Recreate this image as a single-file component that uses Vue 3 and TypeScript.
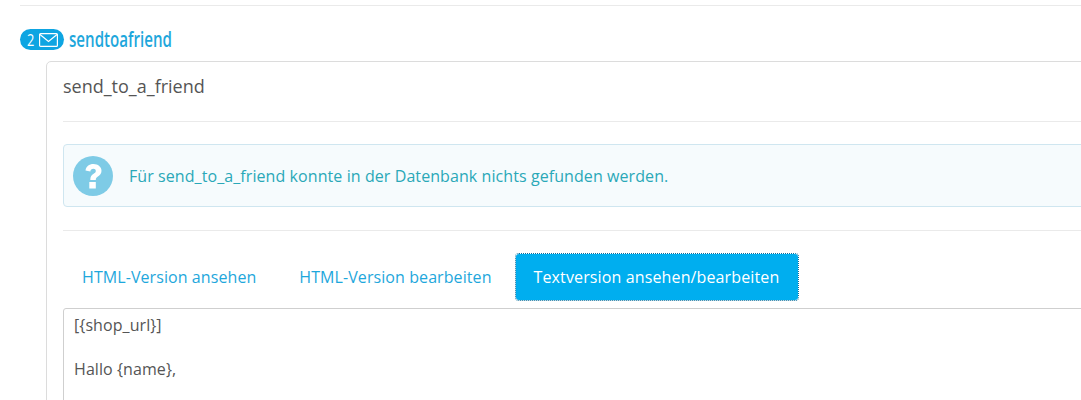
<script setup lang="ts">
const tabs = [
  { label: 'HTML-Version ansehen', active: false },
  { label: 'HTML-Version bearbeiten', active: false },
  { label: 'Textversion ansehen/bearbeiten', active: true },
]
</script>

<template>
  <div class="page">
    <hr class="top-line" />
    <h3 class="heading">
      <span class="badge">
        <span class="count">2</span>
        <svg class="mail" viewBox="0 0 19 14" width="19" height="14" fill="none" stroke="#fff" stroke-width="1.2">
          <rect x="0.600" y="0.600" width="17.800" height="12.800" rx="1" />
          <path d="M1 1.500L9.500 8.500 18 1.500" />
        </svg>
      </span>
      <span class="title">sendtoafriend</span>
    </h3>
    <div class="panel">
      <div class="panel-title">send_to_a_friend</div>
      <hr class="line" />
      <div class="alert">
        <svg class="help" viewBox="0 0 40 40" width="40" height="40">
          <circle cx="20" cy="20" r="20" fill="#7ecbe6" />
          <path
            d="M12.500 14.500C13 10.500 16 8 20.500 8c4.500 0 8 2.800 8 6.800 0 3-1.700 4.500-3.600 5.800-1.500 1-2.100 1.600-2.100 3.400h-5.500c0-3.300 1-4.700 3-6 1.400-.9 2.500-1.600 2.500-3 0-1.300-1-2.200-2.500-2.200-1.700 0-2.700 1-3 2.600z"
            fill="#fff"
          />
          <rect x="16.300" y="26" width="6.500" height="6.500" fill="#fff" />
        </svg>
        <span class="alert-text">Für send_to_a_friend konnte in der Datenbank nichts gefunden werden.</span>
      </div>
      <hr class="line" />
      <div class="tabs">
        <a v-for="tab in tabs" :key="tab.label" class="tab" :class="{ active: tab.active }">{{ tab.label }}</a>
      </div>
      <div class="editor">
        <p>[{shop_url}]</p>
        <p class="gap">Hallo {name},</p>
      </div>
    </div>
  </div>
</template>

<style scoped>
.page {
  width: 1081px;
  height: 400px;
  overflow: hidden;
  box-sizing: border-box;
  padding: 5px 0 0 20px;
  font-family: "Open Sans", sans-serif;
  background: #fff;
}

hr {
  border: none;
  margin: 0;
  height: 1px;
  background: #eaeaea;
}

.heading {
  display: flex;
  align-items: center;
  gap: 5px;
  height: 21px;
  margin: 23px 0 0;
  font-weight: 400;
}

.badge {
  display: flex;
  align-items: center;
  width: 44px;
  height: 21px;
  box-sizing: border-box;
  padding-left: 7px;
  border-radius: 11px;
  background: #0ea5e2;
  color: #fff;
}

.count {
  display: inline-block;
  width: 12px;
  font-size: 16px;
  transform: scaleX(0.8);
  transform-origin: left center;
}

.title {
  display: inline-block;
  font-size: 21px;
  font-weight: 600;
  color: #1ea7dc;
  transform: scaleX(0.72);
  transform-origin: left center;
  margin-top: -2px;
}

.panel {
  margin: 11px 0 0 26px;
  width: 1100px;
  box-sizing: border-box;
  padding: 0 16px;
  border: 1px solid #dcdcdc;
  border-radius: 5px 0 0 0;
}

.panel-title {
  height: 59px;
  line-height: 49px;
  font-size: 18px;
  color: #555;
}

.alert {
  display: flex;
  align-items: center;
  gap: 16px;
  height: 63px;
  margin: 22px 0 23px;
  box-sizing: border-box;
  padding-left: 9px;
  border: 1px solid #cfe6f0;
  border-radius: 4px;
  background: #f6fbfd;
  font-size: 16px;
  color: #2aa8b8;
}

.alert-text {
  letter-spacing: 0.08px;
}

.help {
  flex: none;
}

.tabs {
  display: flex;
  gap: 3px;
  margin: 22px 0 0 -1px;
}

.tab {
  height: 48px;
  box-sizing: border-box;
  padding: 0 19px;
  line-height: 46px;
  font-size: 16px;
  letter-spacing: 0.08px;
  color: #1ea7dc;
  border: 1px solid transparent;
  border-radius: 4px;
}

.tab.active {
  padding: 0 19px 0 18px;
  letter-spacing: 0.13px;
  background: #00aeef;
  background-clip: padding-box;
  color: #fff;
  border: 1px dotted #0b6f9c;
}

.editor {
  margin-top: 7px;
  height: 140px;
  box-sizing: border-box;
  padding: 6px 10px;
  border: 1px solid #cfcfcf;
  border-radius: 3px 0 0 0;
  font-size: 16px;
  letter-spacing: 0.08px;
  color: #555;
}

.editor p {
  margin: 0;
  line-height: 20px;
}

.editor .gap {
  margin-top: 24px;
}
</style>

<style>
html,
body {
  margin: 0;
  background: #fff;
}
</style>
